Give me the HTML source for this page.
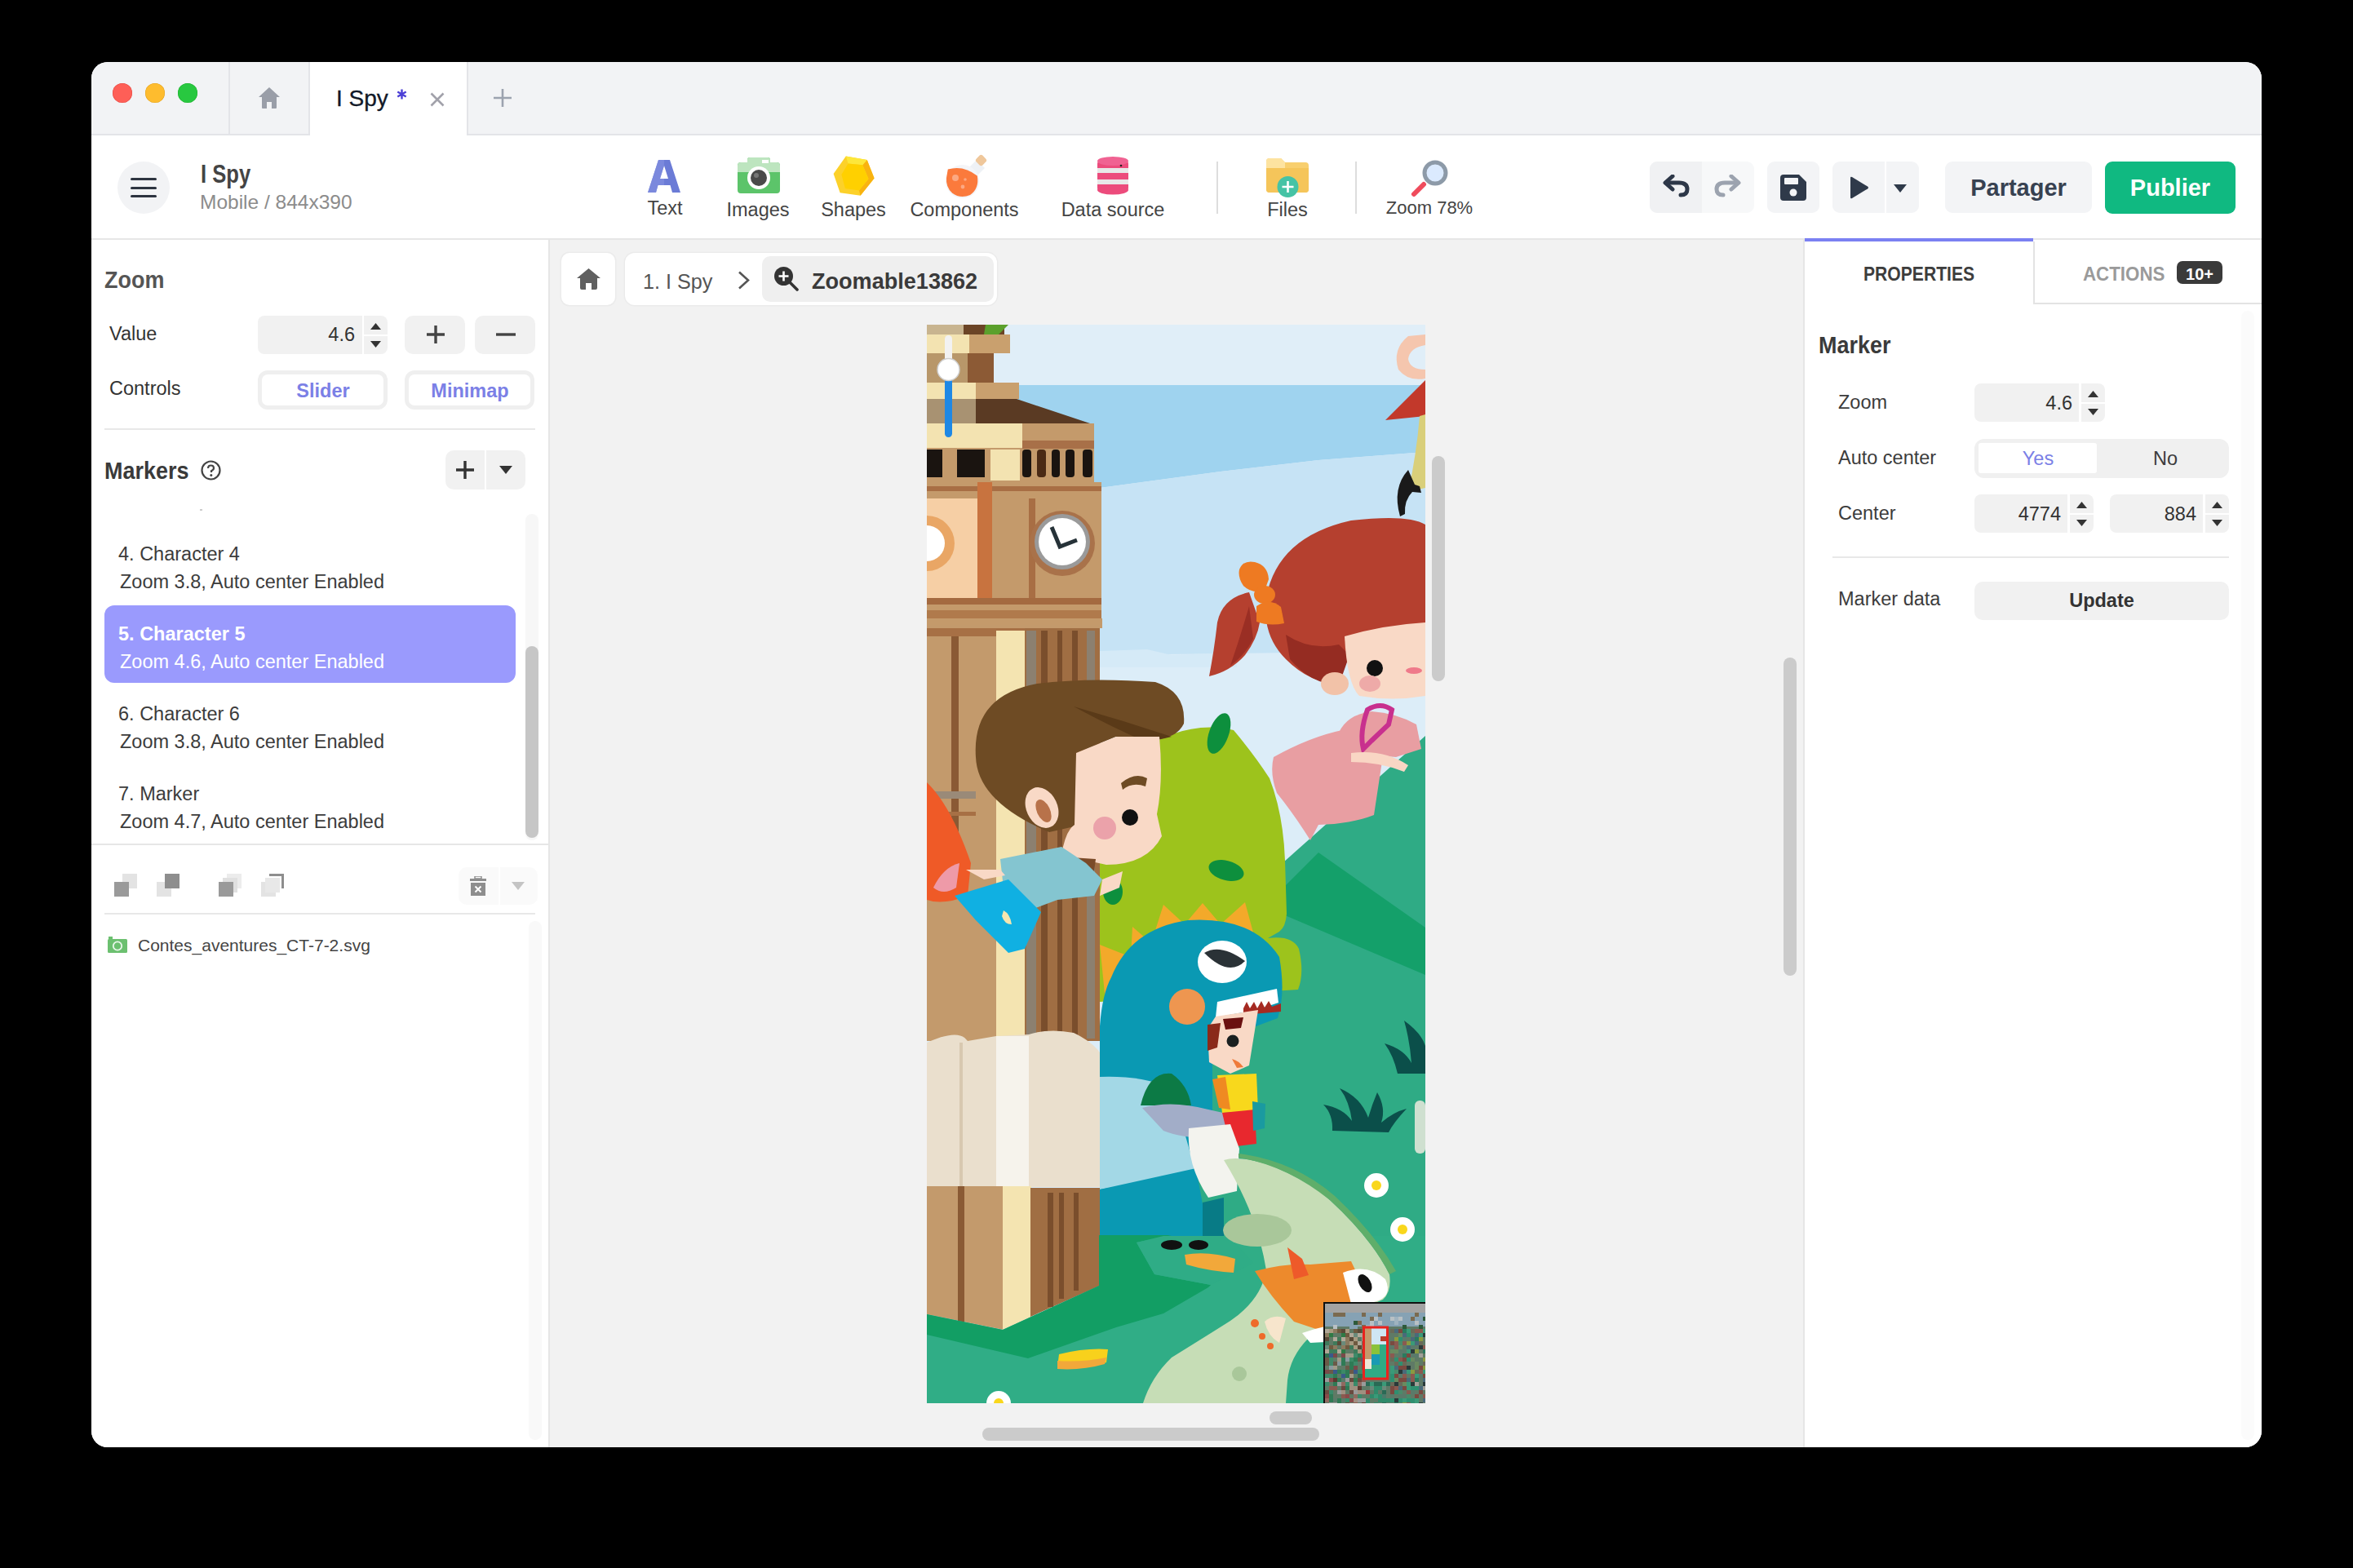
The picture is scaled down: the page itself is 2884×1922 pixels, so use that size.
<!DOCTYPE html><html><head><meta charset="utf-8"><style>
html,body{margin:0;padding:0;width:2884px;height:1922px;overflow:hidden;background:#000;}
body{font-family:"Liberation Sans", sans-serif;}
#win{position:absolute;left:112px;top:76px;width:2660px;height:1698px;border-radius:20px;overflow:hidden;background:#fff;}
#pg{position:absolute;left:-112px;top:-76px;width:2884px;height:1922px;}
.t{position:absolute;white-space:nowrap;}
.r{position:absolute;display:block;}
</style></head><body><div id="win"><div id="pg">
<div class="r" style="left:112px;top:76px;width:2660px;height:90px;background:#f2f3f5;"></div>
<div class="r" style="left:112px;top:164px;width:2660px;height:2px;background:#e3e4e8;"></div>
<div class="r" style="left:138px;top:102px;width:24px;height:24px;border-radius:50%;background:#fe5f57;box-shadow:inset 0 0 0 0.5px #e14640"></div>
<div class="r" style="left:178px;top:102px;width:24px;height:24px;border-radius:50%;background:#febc2e;box-shadow:inset 0 0 0 0.5px #dfa123"></div>
<div class="r" style="left:218px;top:102px;width:24px;height:24px;border-radius:50%;background:#28c840;box-shadow:inset 0 0 0 0.5px #1dad2b"></div>
<div class="r" style="left:280px;top:76px;width:2px;height:90px;background:#e3e4e8;"></div>
<div class="r" style="left:378px;top:76px;width:2px;height:90px;background:#e3e4e8;"></div>
<svg class="r" style="left:317px;top:107px;" width="26" height="26" viewBox="0 0 26 26"><path d="M13 0 L26 12 L22 12 L22 25 Q22 26 21 26 L16 26 L16 18 L10 18 L10 26 L5 26 Q4 26 4 25 L4 12 L0 12 Z" fill="#9a9ea8"/></svg>
<div class="r" style="left:380px;top:76px;width:192px;height:90px;background:#ffffff;"></div>
<div class="r" style="left:572px;top:76px;width:2px;height:90px;background:#e3e4e8;"></div>
<div class="t" style="left:412px;top:107.2px;font-size:28px;line-height:28px;color:#111827;font-weight:400;-webkit-text-stroke:0.3px #111827">I Spy</div>
<svg class="r" style="left:486px;top:109px;" width="13" height="13" viewBox="0 0 13 13"><path d="M6.5 0.5 V12.5 M1.3 3.5 L11.7 9.5 M11.7 3.5 L1.3 9.5" stroke="#4b3fd6" stroke-width="2.4"/></svg>
<svg class="r" style="left:527px;top:113px;" width="18" height="18" viewBox="0 0 18 18"><path d="M1.5 1.5 L16.5 16.5 M16.5 1.5 L1.5 16.5" stroke="#a1a1aa" stroke-width="2.6" stroke-linecap="butt"/></svg>
<svg class="r" style="left:604px;top:108px;" width="24" height="24" viewBox="0 0 24 24"><path d="M12 1 V23 M1 12 H23" stroke="#9ca3af" stroke-width="2.6"/></svg>
<div class="r" style="left:112px;top:166px;width:2660px;height:126px;background:#ffffff;"></div>
<div class="r" style="left:112px;top:292px;width:2660px;height:2px;background:#e6e6e6;"></div>
<div class="r" style="left:144px;top:198px;width:64px;height:64px;border-radius:50%;background:#f2f3f5"></div>
<div class="r" style="left:160px;top:218px;width:32px;height:3px;border-radius:2px;background:#2d3440"></div>
<div class="r" style="left:160px;top:228.5px;width:32px;height:3px;border-radius:2px;background:#2d3440"></div>
<div class="r" style="left:160px;top:239px;width:32px;height:3px;border-radius:2px;background:#2d3440"></div>
<div class="t" style="left:246px;top:196.8px;font-size:32px;line-height:32px;color:#444;font-weight:700;transform:scaleX(0.8);transform-origin:0 0;">I Spy</div>
<div class="t" style="left:245px;top:236.2px;font-size:24.5px;line-height:24.5px;color:#8c8c8c;font-weight:400;">Mobile / 844x390</div>
<svg class="r" style="left:794px;top:196px;" width="40" height="40" viewBox="0 0 40 40"><path fill-rule="evenodd" d="M13 0 H27 L40 40 H30 L27.5 31 H12.5 L10 40 H0 Z M15 23 H25 L20 7 Z" fill="#6b7bd6"/><path d="M13 0 H20 V7 L15 23 H20 V31 H12.5 L10 40 H0 Z" fill="#8190e0" opacity="0.7"/></svg>
<div class="t" style="left:755.0px;width:120px;text-align:center;top:244.0px;font-size:23.5px;line-height:23.5px;color:#444;font-weight:400;">Text</div>
<svg class="r" style="left:904px;top:193px;" width="52" height="44" viewBox="0 0 52 44">
<path d="M12 3 Q12 0 15 0 H37 Q40 0 40 3 V6 H48 Q52 6 52 10 V40 Q52 44 48 44 H4 Q0 44 0 40 V10 Q0 6 4 6 H12 Z" fill="#5cc46a"/>
<path d="M12 3 Q12 0 15 0 H37 Q40 0 40 3 V6 H48 Q52 6 52 10 V18 H0 V10 Q0 6 4 6 H12 Z" fill="#bde5bf"/>
<rect x="30" y="3" width="8" height="4" fill="#fff"/>
<circle cx="26" cy="25" r="14" fill="#fff"/><circle cx="26" cy="25" r="10" fill="#4a4a4a"/><circle cx="23" cy="22" r="3" fill="#777"/></svg>
<div class="t" style="left:859.0px;width:140px;text-align:center;top:246.0px;font-size:23.5px;line-height:23.5px;color:#444;font-weight:400;">Images</div>
<svg class="r" style="left:1020px;top:191px;" width="54" height="51" viewBox="0 0 54 51">
<path d="M16.8 0.6 L42.7 5 L51.6 27.4 L34.6 48.8 L9.6 45.3 L1.6 22 Z" fill="#fcd12a"/>
<path d="M42.7 5 L51.6 27.4 L34.6 48.8 L32.9 42.6 L44.5 28.3 L37.3 11.3 Z" fill="#f9b310"/>
<path d="M16.8 0.6 L42.7 5 L37.3 11.3 L19.5 9.5 Z" fill="#fde73a"/>
<path d="M19.5 9.5 L37.3 11.3 L44.5 28.3 L32.9 42.6 L15.9 40 L11.4 23 Z" fill="#ffd000"/></svg>
<div class="t" style="left:976.0px;width:140px;text-align:center;top:246.0px;font-size:23.5px;line-height:23.5px;color:#444;font-weight:400;">Shapes</div>
<svg class="r" style="left:1157px;top:188px;" width="56" height="56" viewBox="0 0 56 56">
<path d="M26 22 L40 8 L50 18 L36 32 Z" fill="#eef1f5"/>
<rect x="40" y="3" width="11" height="11" rx="3" transform="rotate(45 45.5 8.5)" fill="#efc79b"/>
<circle cx="22.6" cy="34.4" r="20.5" fill="#f4f5f8"/>
<path d="M4.8 19.5 Q24 14 40.8 27.5 Q43.5 43 32 51 Q20 56 10 48.5 Q2 41 3 30 Z" fill="#fb7a3c"/>
<circle cx="14" cy="30" r="4" fill="#fca882"/><circle cx="26" cy="32" r="1.8" fill="#fca882"/><circle cx="23" cy="41" r="2.4" fill="#fca882"/></svg>
<div class="t" style="left:1092.0px;width:180px;text-align:center;top:246.0px;font-size:23.5px;line-height:23.5px;color:#444;font-weight:400;">Components</div>
<svg class="r" style="left:1345px;top:192px;" width="38" height="47" viewBox="0 0 38 47">
<rect x="0" y="5" width="38" height="37" rx="4" fill="#ec4b7c"/>
<ellipse cx="19" cy="5.5" rx="19" ry="5.5" fill="#f06292"/>
<rect x="0" y="14" width="38" height="6" fill="#e8e8e8"/>
<rect x="0" y="28" width="38" height="6" fill="#e8e8e8"/>
<ellipse cx="19" cy="41" rx="19" ry="5.5" fill="#ec4b7c"/>
<circle cx="29" cy="11" r="1.3" fill="#222"/></svg>
<div class="t" style="left:1284.0px;width:160px;text-align:center;top:246.0px;font-size:23.5px;line-height:23.5px;color:#444;font-weight:400;">Data source</div>
<div class="r" style="left:1491px;top:198px;width:2px;height:64px;background:#dddddd;"></div>
<svg class="r" style="left:1552px;top:194px;" width="54" height="48" viewBox="0 0 54 48">
<path d="M0 4 Q0 0 4 0 H18 L23 5 H48 Q52 5 52 9 V38 Q52 42 48 42 H4 Q0 42 0 38 Z" fill="#f8cf6e"/>
<path d="M0 12 H52 V38 Q52 42 48 42 H4 Q0 42 0 38 Z" fill="#f5c55a"/>
<path d="M0 4 Q0 0 4 0 H18 L23 5 V12 H0 Z" fill="#fde3a0"/>
<circle cx="26.5" cy="35" r="13" fill="#46c3a5"/>
<path d="M26.5 28 V42 M19.5 35 H33.5" stroke="#fff" stroke-width="2.6"/></svg>
<div class="t" style="left:1528.0px;width:100px;text-align:center;top:246.0px;font-size:23.5px;line-height:23.5px;color:#444;font-weight:400;">Files</div>
<div class="r" style="left:1661px;top:198px;width:2px;height:64px;background:#dddddd;"></div>
<svg class="r" style="left:1729px;top:196px;" width="46" height="46" viewBox="0 0 46 46">
<line x1="4" y1="42" x2="16" y2="30" stroke="#ef4b5c" stroke-width="6" stroke-linecap="round"/>
<circle cx="30" cy="16" r="13" fill="#dbeafe" stroke="#8d9aa8" stroke-width="5"/></svg>
<div class="t" style="left:1682.0px;width:140px;text-align:center;top:243.8px;font-size:22px;line-height:22px;color:#444;font-weight:400;">Zoom 78%</div>
<div class="r" style="left:2022px;top:198px;width:128px;height:63px;border-radius:9px;background:#f7f8f9"></div>
<div class="r" style="left:2022px;top:198px;width:64px;height:63px;border-radius:9px 0 0 9px;background:#f0f1f3"></div>
<svg class="r" style="left:2038px;top:214px;" width="34" height="28" viewBox="0 0 34 28"><path d="M12 2 L3 10 L12 18" fill="none" stroke="#2d3748" stroke-width="5" stroke-linecap="round" stroke-linejoin="round"/><path d="M4 10 H20 Q30 10 30 18 Q30 25 22 25" fill="none" stroke="#2d3748" stroke-width="5" stroke-linecap="round"/></svg>
<svg class="r" style="left:2100px;top:214px;" width="34" height="28" viewBox="0 0 34 28"><g transform="translate(34,0) scale(-1,1)"><path d="M12 2 L3 10 L12 18" fill="none" stroke="#9ca3af" stroke-width="5" stroke-linecap="round" stroke-linejoin="round"/><path d="M4 10 H20 Q30 10 30 18 Q30 25 22 25" fill="none" stroke="#9ca3af" stroke-width="5" stroke-linecap="round"/></g></svg>
<div class="r" style="left:2166px;top:198px;width:64px;height:63px;border-radius:9px;background:#f3f4f6"></div>
<svg class="r" style="left:2182px;top:214px;" width="32" height="32" viewBox="0 0 32 32"><path d="M0 4 Q0 0 4 0 H23 L32 9 V28 Q32 32 28 32 H4 Q0 32 0 28 Z" fill="#2f3a4a"/><rect x="5" y="4" width="17" height="8" rx="1" fill="#f3f4f6"/><circle cx="16" cy="22" r="4.5" fill="#f3f4f6"/></svg>
<div class="r" style="left:2246px;top:198px;width:106px;height:63px;border-radius:9px;background:#f3f4f6"></div>
<div class="r" style="left:2310px;top:198px;width:2px;height:63px;background:#ffffff;"></div>
<svg class="r" style="left:2266px;top:216px;" width="25" height="28" viewBox="0 0 25 28"><path d="M2 2 Q2 0 4 1 L23 12.5 Q25 14 23 15.5 L4 27 Q2 28 2 26 Z" fill="#2f3a4a"/></svg>
<svg class="r" style="left:2321px;top:226px;" width="16" height="10" viewBox="0 0 16 10"><path d="M0 0 H16 L8 10 Z" fill="#2f3a4a"/></svg>
<div class="r" style="left:2384px;top:198px;width:180px;height:63px;border-radius:9px;background:#f3f4f6"></div>
<div class="t" style="left:2384.0px;width:180px;text-align:center;top:215.8px;font-size:29px;line-height:29px;color:#374151;font-weight:700;">Partager</div>
<div class="r" style="left:2580px;top:198px;width:160px;height:64px;border-radius:9px;background:#10b981"></div>
<div class="t" style="left:2580.0px;width:160px;text-align:center;top:215.8px;font-size:29px;line-height:29px;color:#ffffff;font-weight:700;">Publier</div>
<div class="r" style="left:112px;top:294px;width:560px;height:1480px;background:#ffffff;"></div>
<div class="r" style="left:672px;top:294px;width:2px;height:1480px;background:#e6e6e6;"></div>
<div class="t" style="left:128px;top:329.4px;font-size:29px;line-height:29px;color:#555;font-weight:700;transform:scaleX(0.93);transform-origin:0 0;">Zoom</div>
<div class="t" style="left:134px;top:397.5px;font-size:23.5px;line-height:23.5px;color:#333;font-weight:400;">Value</div>
<div class="r" style="left:316px;top:387px;width:128px;height:47px;border-radius:8px 0 0 8px;background:#f1f1f1"></div>
<div class="r" style="left:446px;top:387px;width:29px;height:22.5px;border-radius:0 8px 0 0;background:#f1f1f1"></div>
<div class="r" style="left:446px;top:411.5px;width:29px;height:22.5px;border-radius:0 0 8px 0;background:#f1f1f1"></div>
<div class="t" style="left:355px;width:80px;text-align:right;top:399.0px;font-size:23.5px;line-height:23.5px;color:#333;font-weight:400;">4.6</div>
<svg class="r" style="left:454px;top:396px;" width="13" height="8" viewBox="0 0 13 8"><path d="M0 8 L6.5 0 L13 8 Z" fill="#333"/></svg>
<svg class="r" style="left:454px;top:418px;" width="13" height="8" viewBox="0 0 13 8"><path d="M0 0 L6.5 8 L13 0 Z" fill="#333"/></svg>
<div class="r" style="left:496px;top:387px;width:74px;height:47px;border-radius:10px;background:#f1f1f1"></div>
<div class="r" style="left:582px;top:387px;width:74px;height:47px;border-radius:10px;background:#f1f1f1"></div>
<svg class="r" style="left:522px;top:398px;" width="24" height="24" viewBox="0 0 24 24"><path d="M12 1 V23 M1 12 H23" stroke="#444" stroke-width="3.4"/></svg>
<svg class="r" style="left:608px;top:408px;" width="24" height="4" viewBox="0 0 24 4"><path d="M0 2 H24" stroke="#444" stroke-width="3.4"/></svg>
<div class="t" style="left:134px;top:465.3px;font-size:23.5px;line-height:23.5px;color:#333;font-weight:400;">Controls</div>
<div class="r" style="left:316px;top:454px;width:159px;height:48px;border-radius:12px;background:#ffffff;box-shadow:inset 0 0 0 5px #efefef"></div>
<div class="r" style="left:496px;top:454px;width:159px;height:48px;border-radius:12px;background:#ffffff;box-shadow:inset 0 0 0 5px #efefef"></div>
<div class="t" style="left:321.0px;width:150px;text-align:center;top:468.0px;font-size:23.5px;line-height:23.5px;color:#7b80e6;font-weight:700;">Slider</div>
<div class="t" style="left:501.0px;width:150px;text-align:center;top:468.0px;font-size:23.5px;line-height:23.5px;color:#7b80e6;font-weight:700;">Minimap</div>
<div class="r" style="left:128px;top:525px;width:528px;height:2px;background:#e8e8e8;"></div>
<div class="t" style="left:128px;top:563.4px;font-size:29px;line-height:29px;color:#3a3a3a;font-weight:700;transform:scaleX(0.93);transform-origin:0 0;">Markers</div>
<svg class="r" style="left:246px;top:564px;" width="25" height="25" viewBox="0 0 25 25"><circle cx="12.5" cy="12.5" r="11" fill="none" stroke="#444" stroke-width="2.2"/><path d="M9 10 Q9 6.5 12.5 6.5 Q16 6.5 16 9.8 Q16 12 13 13.2 V15" fill="none" stroke="#444" stroke-width="2.2"/><circle cx="12.8" cy="18.5" r="1.5" fill="#444"/></svg>
<div class="r" style="left:546px;top:552px;width:98px;height:48px;border-radius:10px;background:#f1f1f1"></div>
<div class="r" style="left:594px;top:552px;width:2px;height:48px;background:#ffffff;"></div>
<svg class="r" style="left:558px;top:564px;" width="24" height="24" viewBox="0 0 24 24"><path d="M12 1 V23 M1 12 H23" stroke="#333" stroke-width="3.4"/></svg>
<svg class="r" style="left:612px;top:571px;" width="16" height="10" viewBox="0 0 16 10"><path d="M0 0 H16 L8 10 Z" fill="#333"/></svg>
<div class="r" style="left:644px;top:630px;width:16px;height:400px;border-radius:8px;background:#f7f7f7"></div>
<div class="r" style="left:644px;top:792px;width:16px;height:235px;border-radius:8px;background:#c6c6c6"></div>
<div class="r" style="left:245px;top:624px;width:3px;height:2px;background:#cccccc;"></div>
<div class="t" style="left:145px;top:668.0px;font-size:23.5px;line-height:23.5px;color:#3c3c3c;font-weight:400;">4. Character 4</div>
<div class="t" style="left:147px;top:701.7px;font-size:23.5px;line-height:23.5px;color:#3c3c3c;font-weight:400;">Zoom 3.8, Auto center Enabled</div>
<div class="r" style="left:128px;top:742px;width:504px;height:95px;border-radius:12px;background:#9a9afd"></div>
<div class="t" style="left:145px;top:766.0px;font-size:23.5px;line-height:23.5px;color:#ffffff;font-weight:700;">5. Character 5</div>
<div class="t" style="left:147px;top:799.5px;font-size:23.5px;line-height:23.5px;color:#ffffff;font-weight:400;">Zoom 4.6, Auto center Enabled</div>
<div class="t" style="left:145px;top:864.0px;font-size:23.5px;line-height:23.5px;color:#3c3c3c;font-weight:400;">6. Character 6</div>
<div class="t" style="left:147px;top:898.0px;font-size:23.5px;line-height:23.5px;color:#3c3c3c;font-weight:400;">Zoom 3.8, Auto center Enabled</div>
<div class="t" style="left:145px;top:962.0px;font-size:23.5px;line-height:23.5px;color:#3c3c3c;font-weight:400;">7. Marker</div>
<div class="t" style="left:147px;top:995.7px;font-size:23.5px;line-height:23.5px;color:#3c3c3c;font-weight:400;">Zoom 4.7, Auto center Enabled</div>
<div class="r" style="left:112px;top:1034px;width:560px;height:2px;background:#e6e6e6;"></div>
<svg class="r" style="left:140px;top:1071px;" width="28" height="28" viewBox="0 0 28 28"><rect x="10" y="0" width="18" height="18" fill="#e3e3e3"/><rect x="0" y="10" width="18" height="18" fill="#9a9a9a"/></svg>
<svg class="r" style="left:192px;top:1071px;" width="28" height="28" viewBox="0 0 28 28"><rect x="0" y="10" width="18" height="18" fill="#e3e3e3"/><rect x="10" y="0" width="18" height="18" fill="#8e8e8e"/></svg>
<svg class="r" style="left:268px;top:1071px;" width="28" height="28" viewBox="0 0 28 28"><rect x="10" y="0" width="18" height="18" fill="#ececec"/><rect x="5" y="5" width="18" height="18" fill="#e0e0e0"/><rect x="0" y="10" width="18" height="18" fill="#9a9a9a"/></svg>
<svg class="r" style="left:320px;top:1071px;" width="28" height="28" viewBox="0 0 28 28"><rect x="0" y="10" width="18" height="18" fill="#e3e3e3"/><rect x="5" y="5" width="18" height="18" fill="#e8e8e8"/><path d="M10 1.5 H26.5 V18" fill="none" stroke="#8e8e8e" stroke-width="3"/></svg>
<div class="r" style="left:562px;top:1063px;width:97px;height:46px;border-radius:10px;background:#fafafa"></div>
<div class="r" style="left:611px;top:1063px;width:2px;height:46px;background:#ffffff;"></div>
<svg class="r" style="left:576px;top:1074px;" width="20" height="25" viewBox="0 0 20 25"><rect x="0" y="3" width="20" height="3" fill="#8e8e8e"/><rect x="6" y="0" width="8" height="3" fill="none" stroke="#8e8e8e" stroke-width="1.5"/><path d="M1 8 H19 V24 H1 Z" fill="#8e8e8e"/><path d="M6.5 12.5 L13.5 19.5 M13.5 12.5 L6.5 19.5" stroke="#fff" stroke-width="2"/></svg>
<svg class="r" style="left:627px;top:1081px;" width="16" height="10" viewBox="0 0 16 10"><path d="M0 0 H16 L8 10 Z" fill="#c4c4c4"/></svg>
<div class="r" style="left:128px;top:1119px;width:528px;height:2px;background:#e8e8e8;"></div>
<div class="r" style="left:648px;top:1129px;width:16px;height:636px;border-radius:8px;background:#f9f9f9"></div>
<svg class="r" style="left:132px;top:1148px;" width="24" height="20" viewBox="0 0 24 20"><rect x="0" y="3" width="24" height="17" rx="1.5" fill="#6cc070"/><rect x="1" y="0" width="5" height="3" fill="#6cc070"/><circle cx="12" cy="11.5" r="5.2" fill="none" stroke="#e9f6ea" stroke-width="1.8"/></svg>
<div class="t" style="left:169px;top:1147.5px;font-size:21px;line-height:21px;color:#444;font-weight:400;">Contes_aventures_CT-7-2.svg</div>
<div class="r" style="left:674px;top:294px;width:1537px;height:1480px;background:#f2f2f2;"></div>
<div class="r" style="left:688px;top:310px;width:66px;height:64px;border-radius:10px;background:#fff;box-shadow:0 0 0 1.5px #ebebeb"></div>
<svg class="r" style="left:707px;top:329px;" width="29" height="26" viewBox="0 0 29 26"><path d="M14.5 0 L29 12 L25 12 L25 24 Q25 26 23 26 L18 26 L18 18 L11 18 L11 26 L6 26 Q4 26 4 24 L4 12 L0 12 Z" fill="#606060"/></svg>
<div class="r" style="left:766px;top:310px;width:456px;height:64px;border-radius:12px;background:#fff;box-shadow:0 0 0 1.5px #ebebeb"></div>
<div class="t" style="left:788px;top:331.5px;font-size:26.5px;line-height:26.5px;color:#555;font-weight:400;transform:scaleX(0.95);transform-origin:0 0;">1. I Spy</div>
<svg class="r" style="left:904px;top:332px;" width="16" height="23" viewBox="0 0 16 23"><path d="M2 1.5 L13 11.5 L2 21.5" fill="none" stroke="#555" stroke-width="2.6"/></svg>
<div class="r" style="left:934px;top:314px;width:284px;height:56px;border-radius:10px;background:#efefef"></div>
<svg class="r" style="left:949px;top:327px;" width="30" height="30" viewBox="0 0 30 30"><circle cx="11.5" cy="11.5" r="11.5" fill="#333"/><path d="M11.5 5.5 V17.5 M5.5 11.5 H17.5" stroke="#fff" stroke-width="2.6"/><path d="M19 19 L28 28" stroke="#333" stroke-width="3.6" stroke-linecap="round"/></svg>
<div class="t" style="left:995px;top:329.8px;font-size:28.5px;line-height:28.5px;color:#3a3a3a;font-weight:700;transform:scaleX(0.95);transform-origin:0 0;">Zoomable13862</div>
<div class="r" style="left:2186px;top:806px;width:16px;height:390px;border-radius:8px;background:#cbcbcb"></div>
<div class="r" style="left:1204px;top:1750px;width:413px;height:16px;border-radius:8px;background:#cbcbcb"></div>
<div class="r" style="left:1755px;top:559px;width:16px;height:276px;border-radius:8px;background:#cbcbcb"></div>
<div class="r" style="left:1556px;top:1730px;width:52px;height:16px;border-radius:8px;background:#cbcbcb"></div>
<svg class="r" style="left:1136px;top:398px;overflow:hidden" width="611" height="1322" viewBox="0 0 611 1322">
<rect x="0" y="0" width="611" height="1322" fill="#dcedf8"/>
<!-- sky bands -->
<rect x="0" y="0" width="611" height="75" fill="#e0eef8"/>
<path d="M0 74 H611 V156 L480 166 L360 180 L212 200 L0 205 Z" fill="#9fd3ef"/>
<path d="M212 200 L360 180 L480 166 L611 156 V400 L212 405 Z" fill="#c6e3f5"/>
<path d="M212 400 L270 398 L300 405 L380 402 L380 420 L212 420 Z" fill="#d5eaf7"/>
<!-- top right bits -->
<path d="M590 14 Q570 30 578 55 Q590 70 611 66 L611 55 Q592 55 590 42 Q592 28 611 25 L611 12 Z" fill="#f5c6ae"/>
<path d="M562 117 L611 68 L611 112 Z" fill="#c2392b"/>
<path d="M604 112 L611 110 L611 200 L590 205 Q600 160 604 112 Z" fill="#d9cf7a"/>
<path d="M590 178 Q570 200 580 235 L586 232 Q585 215 595 205 L606 206 L604 198 L598 196 Z" fill="#1a1a1a"/>
<!-- tower top -->
<rect x="0" y="0" width="45" height="12" fill="#c8b48f"/>
<rect x="45" y="0" width="50" height="12" fill="#6b4426"/>
<path d="M72 0 L100 0 L88 12 L70 12 Z" fill="#5ba02c"/>
<rect x="0" y="12" width="102" height="23" fill="#c9a06e"/>
<rect x="0" y="12" width="52" height="23" fill="#f3e3b1"/>
<rect x="0" y="35" width="82" height="36" fill="#8c5a35"/>
<rect x="0" y="35" width="50" height="36" fill="#b8976a"/>
<rect x="0" y="71" width="113" height="20" fill="#c9a06e"/>
<rect x="0" y="71" width="60" height="20" fill="#f3e3b1"/>
<rect x="0" y="91" width="62" height="30" fill="#a89272"/>
<path d="M60 91 L110 91 L200 121 L60 121 Z" fill="#5a3a23"/>
<rect x="0" y="121" width="205" height="72" fill="#c49a6b"/>
<rect x="0" y="121" width="117" height="30" fill="#f3e3b1"/>
<rect x="117" y="142" width="88" height="10" fill="#a87048"/>
<rect x="0" y="153" width="19" height="34" fill="#1a1410"/>
<rect x="37" y="153" width="34" height="34" fill="#1a1410"/>
<rect x="78" y="153" width="36" height="38" fill="#f3e3b1"/>
<rect x="117" y="153" width="11" height="34" rx="4" fill="#1a1410"/>
<rect x="135" y="153" width="11" height="34" rx="4" fill="#4a2a15"/>
<rect x="153" y="153" width="10" height="34" rx="4" fill="#1a1410"/>
<rect x="170" y="153" width="11" height="34" rx="4" fill="#1a1410"/>
<rect x="191" y="153" width="12" height="34" rx="4" fill="#1a1410"/>
<!-- clock section -->
<rect x="0" y="193" width="214" height="176" fill="#c49a6b"/>
<rect x="0" y="198" width="214" height="6" fill="#a86e44"/>
<rect x="0" y="213" width="64" height="127" fill="#f6cfa5"/>
<rect x="62" y="193" width="18" height="150" fill="#c8733f"/>
<rect x="80" y="213" width="45" height="125" fill="#c49a6b"/>
<rect x="125" y="213" width="8" height="125" fill="#a86e44"/>
<circle cx="0" cy="268" r="34" fill="#e9a665"/>
<circle cx="0" cy="268" r="22" fill="#fff"/>
<circle cx="166" cy="268" r="40" fill="#a9724a"/>
<circle cx="166" cy="266" r="34" fill="#9a9a9a"/>
<circle cx="166" cy="266" r="29" fill="#ffffff"/>
<path d="M153 248 L163 272 L184 264" fill="none" stroke="#263238" stroke-width="5"/>
<rect x="0" y="335" width="214" height="8" fill="#a46a40"/>
<rect x="0" y="350" width="214" height="10" fill="#b07a4c"/>
<rect x="65" y="360" width="150" height="12" fill="#c49a6b"/>
<!-- lower tower -->
<rect x="0" y="368" width="212" height="510" fill="#c39a6c"/>
<rect x="0" y="372" width="120" height="10" fill="#a77045"/>
<rect x="30" y="382" width="9" height="320" fill="#8a5a34"/>
<rect x="0" y="572" width="60" height="9" fill="#9a8a78"/>
<rect x="0" y="597" width="60" height="5" fill="#a77045"/>
<rect x="85" y="375" width="35" height="500" fill="#f4e4b1"/>
<rect x="120" y="372" width="92" height="506" fill="#a06e43"/>
<rect x="122" y="375" width="12" height="500" fill="#8c8070"/>
<rect x="140" y="375" width="8" height="500" fill="#7a4e2c"/>
<rect x="160" y="375" width="6" height="500" fill="#7a4e2c"/>
<rect x="178" y="375" width="7" height="500" fill="#7a4e2c"/>
<rect x="196" y="375" width="10" height="500" fill="#8c8070"/>
<path d="M0 880 Q40 862 50 878 L85 872 L125 870 Q150 862 180 868 Q205 880 214 895 V1057 H0 Z" fill="#eadfcd"/>
<rect x="85" y="872" width="40" height="185" fill="#f6f3ec"/>
<rect x="40" y="880" width="4" height="177" fill="#d8c8b0"/>
<path d="M0 1056 H94 V1232 L0 1213 Z" fill="#c39a6c"/>
<rect x="38" y="1056" width="8" height="170" fill="#8a5a34"/>
<path d="M93 1056 H128 V1216 L93 1232 Z" fill="#f4e4b1"/>
<path d="M127 1058 H212 V1178 L127 1216 Z" fill="#a06e43"/>
<rect x="148" y="1064" width="7" height="140" fill="#7a4e2c"/>
<rect x="162" y="1064" width="6" height="130" fill="#7a4e2c"/>
<rect x="180" y="1064" width="6" height="120" fill="#7a4e2c"/>

<!-- right green hill -->
<path d="M437 659 L611 504 V1322 H330 V760 Z" fill="#2fab85"/>
<path d="M480 647 L611 739 V797 L439 724 L437 690 Z" fill="#14a06a"/>
<!-- girl dress -->
<path d="M425 530 Q470 505 509 497 L558 535 L548 601 Q520 612 480 613 L470 632 Q450 600 429 574 Q420 550 425 530 Z" fill="#e89ea2"/>
<path d="M505 500 Q515 478 545 474 Q575 476 600 490 L606 520 L575 530 L520 525 Z" fill="#e89ea2"/>
<path d="M540 472 Q556 462 570 472 L566 490 L545 510 L535 520 Q530 500 540 472 Z" fill="none" stroke="#c8308e" stroke-width="6"/>
<path d="M520 525 Q560 520 590 540 L585 548 Q555 536 520 536 Z" fill="#f9d6c4"/>
<!-- girl hair -->
<path d="M416 334 Q430 260 520 240 Q590 232 611 245 V372 Q560 372 520 388 L505 440 Q470 440 440 410 Q410 380 416 334 Z" fill="#b5402f"/>
<path d="M395 328 Q362 335 356 365 Q352 400 346 431 Q372 425 390 405 Q405 385 408 365 Z" fill="#b5402f"/>
<path d="M395 345 Q385 380 372 418 Q390 405 400 385 Z" fill="#9a2e24"/>
<path d="M440 380 Q470 400 505 392 L518 405 L505 442 Q470 440 445 410 Z" fill="#952c22"/>
<path d="M383 300 Q388 288 402 291 Q418 295 419 312 L414 326 Q398 330 388 320 Q381 310 383 300 Z" fill="#ee7a22"/>
<ellipse cx="414" cy="331" rx="13" ry="11" fill="#ee7a22"/>
<path d="M404 345 Q420 334 434 346 L438 366 Q420 370 404 364 Z" fill="#ee7a22"/>
<!-- girl face -->
<path d="M512 382 Q560 368 611 365 V455 Q570 462 530 455 Q515 440 512 382 Z" fill="#f9d9c6"/>
<ellipse cx="500" cy="440" rx="17" ry="14" fill="#f2c2a8"/>
<circle cx="549" cy="421" r="10" fill="#111"/>
<ellipse cx="543" cy="440" rx="13" ry="10" fill="#eeaaa8"/>
<ellipse cx="597" cy="424" rx="10" ry="4" fill="#ef7a8a"/>
<!-- green dino -->
<path d="M212 560 Q250 522 300 502 Q340 488 376 497 Q402 528 420 556 Q437 600 439 657 L441 722 Q440 738 432 744 L418 752 Q448 748 456 765 Q463 795 455 815 L212 830 Z" fill="#9dc31c"/>
<ellipse cx="358" cy="501" rx="12" ry="26" transform="rotate(20 358 501)" fill="#0d8f3d"/>
<ellipse cx="367" cy="669" rx="22" ry="12" transform="rotate(15 367 669)" fill="#0d8f3d"/>
<ellipse cx="228" cy="695" rx="12" ry="16" fill="#0d8f3d"/>
<!-- boy hair/face -->
<path d="M60 530 Q55 455 135 440 Q200 432 280 438 Q318 450 315 489 Q305 510 270 508 L232 505 L183 525 L181 615 L150 622 Q62 585 60 530 Z" fill="#6e4b24"/>
<path d="M180 468 Q240 485 300 505 L270 512 Q230 495 180 468 Z" fill="#5a3a18"/>
<path d="M232 505 L285 505 Q290 560 282 600 L288 627 Q270 662 220 662 L165 650 Q170 620 181 613 L183 525 Z" fill="#f9d9c6"/>
<path d="M177 653 L207 655 L205 670 L180 668 Z" fill="#7a4a28"/>
<ellipse cx="141" cy="592" rx="19" ry="26" transform="rotate(-25 141 592)" fill="#f9d9c6"/>
<ellipse cx="143" cy="596" rx="8" ry="15" transform="rotate(-25 143 596)" fill="#b8724a"/>
<circle cx="249" cy="604" r="10" fill="#111"/>
<circle cx="218" cy="617" r="14" fill="#eba2aa"/>
<path d="M238 562 Q255 548 270 556 L268 566 Q252 560 240 570 Z" fill="#6e4b24"/>
<!-- orange red thing -->
<path d="M0 561 Q30 590 54 660 L50 700 Q20 712 0 705 Z" fill="#ef5a27"/>
<path d="M8 690 Q20 665 40 660 L36 690 Q20 700 8 690 Z" fill="#ee9aa8"/>
<!-- boy shirt & blue -->
<path d="M90 655 L165 640 L195 660 L215 680 L205 700 L160 705 L120 720 L95 700 Z" fill="#84c5d0"/>
<path d="M48 668 L90 668 L96 675 L70 680 Z" fill="#f9d9c6"/>
<path d="M215 680 L240 670 L236 690 L212 700 Z" fill="#f9d9c6"/>
<path d="M34 700 L100 680 L140 720 L120 765 L100 770 L60 730 Z" fill="#10b0e2"/>
<path d="M94 718 Q102 722 104 735 Q95 735 92 725 Z" fill="#f5e6b0"/>

<!-- spikes -->
<path d="M212 760 L250 775 L252 738 L275 758 L290 711 L316 735 L338 709 L360 735 L390 708 L400 745 L220 840 Z" fill="#f3a92a"/>
<!-- teal dino -->
<path d="M226 800 Q250 740 320 730 Q400 725 432 775 Q440 820 430 850 L350 880 L350 1040 L300 1060 L212 1060 L212 860 Q215 820 226 800 Z" fill="#0a99b3"/>

<path d="M212 922 Q260 920 300 935 L330 1040 L212 1060 Z" fill="#a3d8e6"/>
<path d="M212 1060 L330 1034 L345 1117 L212 1117 Z" fill="#0a99b3"/>
<ellipse cx="362" cy="781" rx="30" ry="26" fill="#ffffff"/>
<path d="M340 770 Q360 758 390 780 Q370 800 340 770 Z" fill="#2a3236"/>
<circle cx="319" cy="836" r="22" fill="#ee9650"/>
<path d="M356 830 L429 814 L431 831 L404 840 L354 849 Z" fill="#ffffff"/>
<path d="M388 838 L392 830 L396 838 L401 830 L405 838 L410 829 L414 837 L419 829 L423 836 L434 832 L434 842 L388 846 Z" fill="#a52a22"/>
<path d="M354 848 L406 840 L395 908 L372 918 L346 904 L344 863 Z" fill="#f9d9c6"/>
<path d="M344 858 L360 856 L356 886 L344 890 Z" fill="#8a2a1a"/>
<path d="M363 851 L388 849 L385 862 L366 864 Z" fill="#6a1010"/>
<circle cx="375" cy="878" r="7.5" fill="#1a2020"/>
<path d="M374 900 Q382 902 388 910 L380 911 Z" fill="#ef7a3a"/>
<path d="M262 957 Q272 915 300 918 Q320 932 324 957 Z" fill="#0c7a45"/>
<path d="M264 960 Q300 950 345 962 L372 968 L370 996 Q320 1000 290 988 Z" fill="#a2adc8"/>
<path d="M356 920 L404 918 L406 964 L362 966 Z" fill="#f8d81c"/>
<path d="M350 925 L366 922 L372 962 L358 960 Z" fill="#ef8a22"/>
<path d="M362 966 L402 962 L404 1004 L372 1008 Z" fill="#e8282e"/>
<path d="M399 952 L415 955 L414 985 L400 988 Z" fill="#1a9aa0"/>
<path d="M321 985 L372 980 L383 1010 L380 1062 L345 1070 Q318 1030 321 985 Z" fill="#f3f3ee"/>
<path d="M338 1076 L364 1070 L364 1117 L338 1117 Z" fill="#087b86"/>
<!-- ground -->
<path d="M0 1213 L93 1232 L128 1216 L211 1178 L211 1117 L611 1117 V1322 H0 Z" fill="#30ad86"/>
<path d="M0 1213 L93 1232 L128 1216 L211 1178 L211 1116 L300 1116 L257 1125 L279 1164 L348 1177 L345 1180 L290 1212 L232 1229 L124 1267 L0 1238 Z" fill="#129e64"/>
<path d="M257 1125 L290 1117 L370 1117 L400 1150 L348 1177 L279 1164 Z" fill="#2fac86"/>
<!-- path -->
<path d="M364 1024 Q382 1018 420 1030 Q470 1050 494 1073 Q545 1120 567 1164 Q570 1185 559 1195 Q500 1220 468 1242 Q445 1265 442 1294 L440 1322 H265 Q275 1290 300 1266 Q350 1235 372 1221 Q410 1195 416 1159 Q405 1090 364 1024 Z" fill="#c6ddb6"/>
<path d="M382 1021 Q440 1030 494 1073 Q545 1120 567 1164 L575 1160 Q550 1115 500 1068 Q450 1025 382 1016 Z" fill="#5fae6a"/>
<ellipse cx="405" cy="1110" rx="42" ry="20" fill="#a9c79a"/>
<circle cx="383" cy="1286" r="9" fill="#a9c79a"/>
<!-- shoes, leaves -->
<ellipse cx="300" cy="1128" rx="13" ry="6" fill="#111"/>
<ellipse cx="333" cy="1128" rx="12" ry="6" fill="#111"/>
<path d="M316 1140 Q345 1135 378 1145 L376 1162 Q345 1160 318 1152 Z" fill="#f2a83a"/>
<path d="M162 1262 Q195 1254 222 1256 L220 1272 Q190 1280 160 1278 Z" fill="#f8d11c"/>
<path d="M160 1270 Q190 1272 220 1266 L218 1274 Q190 1282 160 1280 Z" fill="#f2a83a"/>
<!-- bird -->
<path d="M402 1160 Q440 1150 470 1152 L520 1148 L535 1180 Q520 1220 480 1232 L450 1222 Q420 1190 402 1160 Z" fill="#ed8a2c"/>
<path d="M442 1131 L460 1145 L468 1165 L450 1170 Z" fill="#ee5a2a"/>
<path d="M510 1162 Q540 1150 562 1170 Q572 1192 548 1198 L520 1200 Z" fill="#ffffff"/>
<ellipse cx="537" cy="1175" rx="7" ry="12" transform="rotate(-30 537 1175)" fill="#111"/>
<path d="M460 1236 Q490 1225 520 1225 L525 1245 L470 1248 Z" fill="#ffffff"/>
<path d="M414 1222 Q425 1212 440 1218 L432 1248 Q418 1240 414 1222 Z" fill="#f7e5cc"/>
<circle cx="402" cy="1224" r="5" fill="#ee6a2a"/><circle cx="411" cy="1240" r="4" fill="#ee6a2a"/><circle cx="421" cy="1252" r="4" fill="#ee6a2a"/>
<!-- grass tufts, flowers -->
<path d="M497 988 Q498 968 486 956 Q510 960 521 976 Q518 952 506 936 Q532 947 541 972 Q546 955 552 941 Q563 960 557 978 Q572 965 588 961 Q572 978 566 990 Z" fill="#0b4f4a"/>
<path d="M577 918 Q572 896 561 881 Q585 888 594 905 Q592 878 585 853 Q606 868 611 884 V918 Z" fill="#0b4f4a"/>
<circle cx="551" cy="1055" r="15" fill="#ffffff"/><circle cx="551" cy="1055" r="6" fill="#f9d71c"/>
<circle cx="583" cy="1109" r="15" fill="#ffffff"/><circle cx="583" cy="1109" r="6" fill="#f9d71c"/>
<circle cx="88" cy="1322" r="15" fill="#ffffff"/><circle cx="88" cy="1322" r="6" fill="#f9d71c"/>
<rect x="598" y="951" width="13" height="65" rx="6" fill="#cfe0d0"/>
<rect x="486" y="1198" width="125" height="124" fill="#111"/>
<rect x="488" y="1200" width="123" height="122" fill="#5f7a66"/>
<rect x="488" y="1200" width="123" height="11" fill="#a3a3a3"/>
<rect x="488" y="1211" width="123" height="17" fill="#86a2b4"/>
<rect x="488" y="1211" width="5" height="5" fill="#86a2b4"/>
<rect x="498" y="1211" width="5" height="5" fill="#7a6a50"/>
<rect x="503" y="1211" width="5" height="5" fill="#7a6a50"/>
<rect x="508" y="1211" width="5" height="5" fill="#7a6a50"/>
<rect x="513" y="1211" width="5" height="5" fill="#86a2b4"/>
<rect x="523" y="1211" width="5" height="5" fill="#86a2b4"/>
<rect x="533" y="1211" width="5" height="5" fill="#7a6a50"/>
<rect x="538" y="1211" width="5" height="5" fill="#86a2b4"/>
<rect x="553" y="1211" width="5" height="5" fill="#7a6a50"/>
<rect x="568" y="1211" width="5" height="5" fill="#86a2b4"/>
<rect x="573" y="1211" width="5" height="5" fill="#86a2b4"/>
<rect x="598" y="1211" width="5" height="5" fill="#7a6a50"/>
<rect x="493" y="1216" width="5" height="5" fill="#86a2b4"/>
<rect x="533" y="1216" width="5" height="5" fill="#86a2b4"/>
<rect x="543" y="1216" width="5" height="5" fill="#7a6a50"/>
<rect x="548" y="1216" width="5" height="5" fill="#b8c0c4"/>
<rect x="563" y="1216" width="5" height="5" fill="#86a2b4"/>
<rect x="568" y="1216" width="5" height="5" fill="#b8c0c4"/>
<rect x="573" y="1216" width="5" height="5" fill="#9fb3bf"/>
<rect x="578" y="1216" width="5" height="5" fill="#b8c0c4"/>
<rect x="593" y="1216" width="5" height="5" fill="#7a6a50"/>
<rect x="608" y="1216" width="3" height="5" fill="#2e5a3a"/>
<rect x="503" y="1221" width="5" height="5" fill="#86a2b4"/>
<rect x="523" y="1221" width="5" height="5" fill="#2e5a3a"/>
<rect x="528" y="1221" width="5" height="5" fill="#7a6a50"/>
<rect x="543" y="1221" width="5" height="5" fill="#b8c0c4"/>
<rect x="553" y="1221" width="5" height="5" fill="#b8c0c4"/>
<rect x="573" y="1221" width="5" height="5" fill="#9fb3bf"/>
<rect x="578" y="1221" width="5" height="5" fill="#86a2b4"/>
<rect x="598" y="1221" width="5" height="5" fill="#b8c0c4"/>
<rect x="498" y="1226" width="5" height="5" fill="#b8c0c4"/>
<rect x="518" y="1226" width="5" height="5" fill="#86a2b4"/>
<rect x="523" y="1226" width="5" height="5" fill="#86a2b4"/>
<rect x="533" y="1226" width="5" height="5" fill="#7a6a50"/>
<rect x="538" y="1226" width="5" height="5" fill="#9fb3bf"/>
<rect x="543" y="1226" width="5" height="5" fill="#b8c0c4"/>
<rect x="558" y="1226" width="5" height="5" fill="#86a2b4"/>
<rect x="583" y="1226" width="5" height="5" fill="#2e5a3a"/>
<rect x="603" y="1226" width="5" height="5" fill="#2e5a3a"/>
<rect x="488" y="1231" width="5" height="5" fill="#b0a898"/>
<rect x="493" y="1231" width="5" height="5" fill="#a89a80"/>
<rect x="498" y="1231" width="5" height="5" fill="#8b7a5e"/>
<rect x="503" y="1231" width="5" height="5" fill="#6e5a40"/>
<rect x="508" y="1231" width="5" height="5" fill="#5a4a38"/>
<rect x="513" y="1231" width="5" height="5" fill="#a89a80"/>
<rect x="523" y="1231" width="5" height="5" fill="#6e5a40"/>
<rect x="528" y="1231" width="5" height="5" fill="#5a4a38"/>
<rect x="533" y="1231" width="5" height="5" fill="#3f7a5a"/>
<rect x="568" y="1231" width="5" height="5" fill="#6a6a58"/>
<rect x="573" y="1231" width="5" height="5" fill="#4a6a7a"/>
<rect x="578" y="1231" width="5" height="5" fill="#7a4a40"/>
<rect x="583" y="1231" width="5" height="5" fill="#2a7a5e"/>
<rect x="588" y="1231" width="5" height="5" fill="#3a9a78"/>
<rect x="593" y="1231" width="5" height="5" fill="#6a6a58"/>
<rect x="598" y="1231" width="5" height="5" fill="#8a5a50"/>
<rect x="603" y="1231" width="5" height="5" fill="#8a5a50"/>
<rect x="608" y="1231" width="3" height="5" fill="#3a9a78"/>
<rect x="488" y="1236" width="5" height="5" fill="#8b7a5e"/>
<rect x="493" y="1236" width="5" height="5" fill="#2f7a45"/>
<rect x="508" y="1236" width="5" height="5" fill="#2f7a45"/>
<rect x="513" y="1236" width="5" height="5" fill="#6e5a40"/>
<rect x="518" y="1236" width="5" height="5" fill="#b0a898"/>
<rect x="523" y="1236" width="5" height="5" fill="#6a8a7a"/>
<rect x="528" y="1236" width="5" height="5" fill="#b0a898"/>
<rect x="533" y="1236" width="5" height="5" fill="#b0a898"/>
<rect x="578" y="1236" width="5" height="5" fill="#6a8a60"/>
<rect x="583" y="1236" width="5" height="5" fill="#4a6a7a"/>
<rect x="588" y="1236" width="5" height="5" fill="#2f8f70"/>
<rect x="598" y="1236" width="5" height="5" fill="#4a6a7a"/>
<rect x="603" y="1236" width="5" height="5" fill="#3a9a78"/>
<rect x="608" y="1236" width="3" height="5" fill="#2a3a3a"/>
<rect x="488" y="1241" width="5" height="5" fill="#5a4a38"/>
<rect x="498" y="1241" width="5" height="5" fill="#b0a898"/>
<rect x="503" y="1241" width="5" height="5" fill="#3f7a5a"/>
<rect x="508" y="1241" width="5" height="5" fill="#b0a898"/>
<rect x="513" y="1241" width="5" height="5" fill="#8b7a5e"/>
<rect x="518" y="1241" width="5" height="5" fill="#5a4a38"/>
<rect x="523" y="1241" width="5" height="5" fill="#a89a80"/>
<rect x="533" y="1241" width="5" height="5" fill="#9a9a90"/>
<rect x="568" y="1241" width="5" height="5" fill="#5a7a6a"/>
<rect x="573" y="1241" width="5" height="5" fill="#8a9a40"/>
<rect x="578" y="1241" width="5" height="5" fill="#2f8f70"/>
<rect x="583" y="1241" width="5" height="5" fill="#5a7a6a"/>
<rect x="593" y="1241" width="5" height="5" fill="#4a6a7a"/>
<rect x="598" y="1241" width="5" height="5" fill="#2a7a5e"/>
<rect x="603" y="1241" width="5" height="5" fill="#8a9a40"/>
<rect x="488" y="1246" width="5" height="5" fill="#3f7a5a"/>
<rect x="498" y="1246" width="5" height="5" fill="#3f7a5a"/>
<rect x="503" y="1246" width="5" height="5" fill="#5a4a38"/>
<rect x="508" y="1246" width="5" height="5" fill="#6a8a7a"/>
<rect x="513" y="1246" width="5" height="5" fill="#8b7a5e"/>
<rect x="518" y="1246" width="5" height="5" fill="#a89a80"/>
<rect x="523" y="1246" width="5" height="5" fill="#6e5a40"/>
<rect x="528" y="1246" width="5" height="5" fill="#b0a898"/>
<rect x="568" y="1246" width="5" height="5" fill="#7a4a40"/>
<rect x="573" y="1246" width="5" height="5" fill="#8a5a50"/>
<rect x="578" y="1246" width="5" height="5" fill="#4a8a6a"/>
<rect x="583" y="1246" width="5" height="5" fill="#8a5a50"/>
<rect x="588" y="1246" width="5" height="5" fill="#8a9a40"/>
<rect x="593" y="1246" width="5" height="5" fill="#3a9a78"/>
<rect x="598" y="1246" width="5" height="5" fill="#4a6a7a"/>
<rect x="603" y="1246" width="5" height="5" fill="#6a6a58"/>
<rect x="488" y="1251" width="5" height="5" fill="#6a8a7a"/>
<rect x="493" y="1251" width="5" height="5" fill="#6e5a40"/>
<rect x="498" y="1251" width="5" height="5" fill="#8b7a5e"/>
<rect x="508" y="1251" width="5" height="5" fill="#8b7a5e"/>
<rect x="513" y="1251" width="5" height="5" fill="#6e5a40"/>
<rect x="518" y="1251" width="5" height="5" fill="#3f7a5a"/>
<rect x="523" y="1251" width="5" height="5" fill="#a89a80"/>
<rect x="528" y="1251" width="5" height="5" fill="#5a4a38"/>
<rect x="533" y="1251" width="5" height="5" fill="#6a8a7a"/>
<rect x="568" y="1251" width="5" height="5" fill="#5a7a6a"/>
<rect x="573" y="1251" width="5" height="5" fill="#8a5a50"/>
<rect x="578" y="1251" width="5" height="5" fill="#6a8a60"/>
<rect x="583" y="1251" width="5" height="5" fill="#5a7a6a"/>
<rect x="588" y="1251" width="5" height="5" fill="#4a6a7a"/>
<rect x="593" y="1251" width="5" height="5" fill="#5a7a6a"/>
<rect x="603" y="1251" width="5" height="5" fill="#2a3a3a"/>
<rect x="608" y="1251" width="3" height="5" fill="#8a5a50"/>
<rect x="488" y="1256" width="5" height="5" fill="#b0a898"/>
<rect x="493" y="1256" width="5" height="5" fill="#3f7a5a"/>
<rect x="498" y="1256" width="5" height="5" fill="#3f7a5a"/>
<rect x="503" y="1256" width="5" height="5" fill="#b0a898"/>
<rect x="508" y="1256" width="5" height="5" fill="#2f7a45"/>
<rect x="523" y="1256" width="5" height="5" fill="#3f7a5a"/>
<rect x="528" y="1256" width="5" height="5" fill="#a89a80"/>
<rect x="533" y="1256" width="5" height="5" fill="#5a4a38"/>
<rect x="568" y="1256" width="5" height="5" fill="#6a8a60"/>
<rect x="573" y="1256" width="5" height="5" fill="#6a8a60"/>
<rect x="578" y="1256" width="5" height="5" fill="#5a7a6a"/>
<rect x="583" y="1256" width="5" height="5" fill="#5a7a6a"/>
<rect x="588" y="1256" width="5" height="5" fill="#3a9a78"/>
<rect x="593" y="1256" width="5" height="5" fill="#2a3a3a"/>
<rect x="598" y="1256" width="5" height="5" fill="#8a9a40"/>
<rect x="608" y="1256" width="3" height="5" fill="#2a7a5e"/>
<rect x="488" y="1261" width="5" height="5" fill="#2f6f4f"/>
<rect x="493" y="1261" width="5" height="5" fill="#3a5a8a"/>
<rect x="498" y="1261" width="5" height="5" fill="#7a4a4a"/>
<rect x="508" y="1261" width="5" height="5" fill="#7a4a4a"/>
<rect x="513" y="1261" width="5" height="5" fill="#a09a88"/>
<rect x="518" y="1261" width="5" height="5" fill="#a09a88"/>
<rect x="523" y="1261" width="5" height="5" fill="#3f8a6a"/>
<rect x="528" y="1261" width="5" height="5" fill="#2f7a55"/>
<rect x="533" y="1261" width="5" height="5" fill="#3f8a6a"/>
<rect x="568" y="1261" width="5" height="5" fill="#8a5a50"/>
<rect x="578" y="1261" width="5" height="5" fill="#5a7a6a"/>
<rect x="583" y="1261" width="5" height="5" fill="#2a7a5e"/>
<rect x="588" y="1261" width="5" height="5" fill="#7a4a40"/>
<rect x="593" y="1261" width="5" height="5" fill="#5a7a6a"/>
<rect x="598" y="1261" width="5" height="5" fill="#5a7a6a"/>
<rect x="603" y="1261" width="5" height="5" fill="#a0a098"/>
<rect x="488" y="1266" width="5" height="5" fill="#6a5a48"/>
<rect x="493" y="1266" width="5" height="5" fill="#3f8a6a"/>
<rect x="503" y="1266" width="5" height="5" fill="#a09a88"/>
<rect x="508" y="1266" width="5" height="5" fill="#2f7a55"/>
<rect x="513" y="1266" width="5" height="5" fill="#8a9aa0"/>
<rect x="518" y="1266" width="5" height="5" fill="#3c8a66"/>
<rect x="523" y="1266" width="5" height="5" fill="#2f7a55"/>
<rect x="528" y="1266" width="5" height="5" fill="#6a5a48"/>
<rect x="533" y="1266" width="5" height="5" fill="#3a5a8a"/>
<rect x="568" y="1266" width="5" height="5" fill="#6a6a58"/>
<rect x="573" y="1266" width="5" height="5" fill="#2f8f70"/>
<rect x="578" y="1266" width="5" height="5" fill="#8a5a50"/>
<rect x="583" y="1266" width="5" height="5" fill="#7a4a40"/>
<rect x="588" y="1266" width="5" height="5" fill="#2f8f70"/>
<rect x="593" y="1266" width="5" height="5" fill="#6a8a60"/>
<rect x="608" y="1266" width="3" height="5" fill="#8a9a40"/>
<rect x="488" y="1271" width="5" height="5" fill="#6a5a48"/>
<rect x="493" y="1271" width="5" height="5" fill="#3f8a6a"/>
<rect x="498" y="1271" width="5" height="5" fill="#6a5a48"/>
<rect x="503" y="1271" width="5" height="5" fill="#8a9aa0"/>
<rect x="508" y="1271" width="5" height="5" fill="#2f7a55"/>
<rect x="518" y="1271" width="5" height="5" fill="#2f7a55"/>
<rect x="523" y="1271" width="5" height="5" fill="#3f8a6a"/>
<rect x="533" y="1271" width="5" height="5" fill="#3a5a8a"/>
<rect x="573" y="1271" width="5" height="5" fill="#6a6a58"/>
<rect x="578" y="1271" width="5" height="5" fill="#2f8f70"/>
<rect x="583" y="1271" width="5" height="5" fill="#6a6a58"/>
<rect x="598" y="1271" width="5" height="5" fill="#6a8a60"/>
<rect x="608" y="1271" width="3" height="5" fill="#6a6a58"/>
<rect x="493" y="1276" width="5" height="5" fill="#8a9aa0"/>
<rect x="498" y="1276" width="5" height="5" fill="#a09a88"/>
<rect x="513" y="1276" width="5" height="5" fill="#6a5a48"/>
<rect x="518" y="1276" width="5" height="5" fill="#2f7a55"/>
<rect x="523" y="1276" width="5" height="5" fill="#7a4a4a"/>
<rect x="533" y="1276" width="5" height="5" fill="#6a5a48"/>
<rect x="568" y="1276" width="5" height="5" fill="#3a9a78"/>
<rect x="573" y="1276" width="5" height="5" fill="#4a6a7a"/>
<rect x="578" y="1276" width="5" height="5" fill="#7a4a40"/>
<rect x="583" y="1276" width="5" height="5" fill="#7a4a40"/>
<rect x="588" y="1276" width="5" height="5" fill="#2a3a3a"/>
<rect x="598" y="1276" width="5" height="5" fill="#6a8a60"/>
<rect x="603" y="1276" width="5" height="5" fill="#7a4a40"/>
<rect x="608" y="1276" width="3" height="5" fill="#8a9a40"/>
<rect x="488" y="1281" width="5" height="5" fill="#7a4a4a"/>
<rect x="493" y="1281" width="5" height="5" fill="#6a5a48"/>
<rect x="498" y="1281" width="5" height="5" fill="#3a5a8a"/>
<rect x="503" y="1281" width="5" height="5" fill="#2f7a55"/>
<rect x="508" y="1281" width="5" height="5" fill="#3c8a66"/>
<rect x="513" y="1281" width="5" height="5" fill="#2f7a55"/>
<rect x="518" y="1281" width="5" height="5" fill="#6a5a48"/>
<rect x="523" y="1281" width="5" height="5" fill="#3a5a8a"/>
<rect x="528" y="1281" width="5" height="5" fill="#3f8a6a"/>
<rect x="568" y="1281" width="5" height="5" fill="#3a9a78"/>
<rect x="573" y="1281" width="5" height="5" fill="#4a8a6a"/>
<rect x="578" y="1281" width="5" height="5" fill="#2a3a3a"/>
<rect x="583" y="1281" width="5" height="5" fill="#4a6a7a"/>
<rect x="588" y="1281" width="5" height="5" fill="#3a9a78"/>
<rect x="593" y="1281" width="5" height="5" fill="#8a9a40"/>
<rect x="598" y="1281" width="5" height="5" fill="#6a6a58"/>
<rect x="603" y="1281" width="5" height="5" fill="#8a5a50"/>
<rect x="608" y="1281" width="3" height="5" fill="#3a9a78"/>
<rect x="488" y="1286" width="5" height="5" fill="#3f8a6a"/>
<rect x="493" y="1286" width="5" height="5" fill="#3f8a6a"/>
<rect x="498" y="1286" width="5" height="5" fill="#2f7a55"/>
<rect x="508" y="1286" width="5" height="5" fill="#3a5a8a"/>
<rect x="513" y="1286" width="5" height="5" fill="#2f7a55"/>
<rect x="518" y="1286" width="5" height="5" fill="#a09a88"/>
<rect x="528" y="1286" width="5" height="5" fill="#2f6f4f"/>
<rect x="533" y="1286" width="5" height="5" fill="#2f7a55"/>
<rect x="568" y="1286" width="5" height="5" fill="#2f8f70"/>
<rect x="573" y="1286" width="5" height="5" fill="#7a4a40"/>
<rect x="578" y="1286" width="5" height="5" fill="#5a7a6a"/>
<rect x="583" y="1286" width="5" height="5" fill="#8a5a50"/>
<rect x="593" y="1286" width="5" height="5" fill="#8a5a50"/>
<rect x="598" y="1286" width="5" height="5" fill="#3a9a78"/>
<rect x="603" y="1286" width="5" height="5" fill="#5a7a6a"/>
<rect x="608" y="1286" width="3" height="5" fill="#7a4a40"/>
<rect x="488" y="1291" width="5" height="5" fill="#9a9a9a"/>
<rect x="493" y="1291" width="5" height="5" fill="#8a4a4a"/>
<rect x="498" y="1291" width="5" height="5" fill="#5a3a30"/>
<rect x="503" y="1291" width="5" height="5" fill="#2f7a55"/>
<rect x="508" y="1291" width="5" height="5" fill="#5a7a6a"/>
<rect x="513" y="1291" width="5" height="5" fill="#9a9a9a"/>
<rect x="518" y="1291" width="5" height="5" fill="#6a4a40"/>
<rect x="523" y="1291" width="5" height="5" fill="#2f7a55"/>
<rect x="528" y="1291" width="5" height="5" fill="#6a4a40"/>
<rect x="533" y="1291" width="5" height="5" fill="#8a5a50"/>
<rect x="568" y="1291" width="5" height="5" fill="#2f8f70"/>
<rect x="573" y="1291" width="5" height="5" fill="#6a8a60"/>
<rect x="578" y="1291" width="5" height="5" fill="#7a4a40"/>
<rect x="583" y="1291" width="5" height="5" fill="#7a4a40"/>
<rect x="588" y="1291" width="5" height="5" fill="#4a6a7a"/>
<rect x="593" y="1291" width="5" height="5" fill="#8a5a50"/>
<rect x="598" y="1291" width="5" height="5" fill="#2a7a5e"/>
<rect x="608" y="1291" width="3" height="5" fill="#4a6a7a"/>
<rect x="488" y="1296" width="5" height="5" fill="#3a8a6a"/>
<rect x="498" y="1296" width="5" height="5" fill="#2f7a55"/>
<rect x="503" y="1296" width="5" height="5" fill="#9a9a9a"/>
<rect x="508" y="1296" width="5" height="5" fill="#906a60"/>
<rect x="513" y="1296" width="5" height="5" fill="#3a8a6a"/>
<rect x="518" y="1296" width="5" height="5" fill="#a09080"/>
<rect x="523" y="1296" width="5" height="5" fill="#3a8a6a"/>
<rect x="528" y="1296" width="5" height="5" fill="#906a60"/>
<rect x="533" y="1296" width="5" height="5" fill="#9a9a9a"/>
<rect x="538" y="1296" width="5" height="5" fill="#2a6a55"/>
<rect x="543" y="1296" width="5" height="5" fill="#3a9a78"/>
<rect x="548" y="1296" width="5" height="5" fill="#2a6a55"/>
<rect x="553" y="1296" width="5" height="5" fill="#2a6a55"/>
<rect x="558" y="1296" width="5" height="5" fill="#3a9a78"/>
<rect x="563" y="1296" width="5" height="5" fill="#2a6a55"/>
<rect x="568" y="1296" width="5" height="5" fill="#6a6a58"/>
<rect x="573" y="1296" width="5" height="5" fill="#2a3a3a"/>
<rect x="578" y="1296" width="5" height="5" fill="#6a6a58"/>
<rect x="583" y="1296" width="5" height="5" fill="#6a8a60"/>
<rect x="588" y="1296" width="5" height="5" fill="#3a9a78"/>
<rect x="593" y="1296" width="5" height="5" fill="#2a3a3a"/>
<rect x="598" y="1296" width="5" height="5" fill="#a0a098"/>
<rect x="608" y="1296" width="3" height="5" fill="#2a3a3a"/>
<rect x="493" y="1301" width="5" height="5" fill="#8a5a50"/>
<rect x="498" y="1301" width="5" height="5" fill="#8a5a50"/>
<rect x="508" y="1301" width="5" height="5" fill="#6a4a40"/>
<rect x="513" y="1301" width="5" height="5" fill="#2f7a55"/>
<rect x="518" y="1301" width="5" height="5" fill="#a09080"/>
<rect x="523" y="1301" width="5" height="5" fill="#a09080"/>
<rect x="528" y="1301" width="5" height="5" fill="#5a3a30"/>
<rect x="543" y="1301" width="5" height="5" fill="#6a8a7a"/>
<rect x="548" y="1301" width="5" height="5" fill="#2f8a6a"/>
<rect x="553" y="1301" width="5" height="5" fill="#2f8a6a"/>
<rect x="558" y="1301" width="5" height="5" fill="#6a8a7a"/>
<rect x="568" y="1301" width="5" height="5" fill="#7a4a40"/>
<rect x="573" y="1301" width="5" height="5" fill="#8a5a50"/>
<rect x="578" y="1301" width="5" height="5" fill="#4a6a7a"/>
<rect x="583" y="1301" width="5" height="5" fill="#7a4a40"/>
<rect x="588" y="1301" width="5" height="5" fill="#3a9a78"/>
<rect x="593" y="1301" width="5" height="5" fill="#2f8f70"/>
<rect x="598" y="1301" width="5" height="5" fill="#2f8f70"/>
<rect x="603" y="1301" width="5" height="5" fill="#4a6a7a"/>
<rect x="608" y="1301" width="3" height="5" fill="#a0a098"/>
<rect x="488" y="1306" width="5" height="5" fill="#6a4a40"/>
<rect x="493" y="1306" width="5" height="5" fill="#3a8a6a"/>
<rect x="503" y="1306" width="5" height="5" fill="#9a9a9a"/>
<rect x="508" y="1306" width="5" height="5" fill="#a09080"/>
<rect x="518" y="1306" width="5" height="5" fill="#6a4a40"/>
<rect x="523" y="1306" width="5" height="5" fill="#9a9a9a"/>
<rect x="528" y="1306" width="5" height="5" fill="#a09080"/>
<rect x="533" y="1306" width="5" height="5" fill="#a09080"/>
<rect x="538" y="1306" width="5" height="5" fill="#a03a3a"/>
<rect x="548" y="1306" width="5" height="5" fill="#2f8a6a"/>
<rect x="558" y="1306" width="5" height="5" fill="#2a6a55"/>
<rect x="568" y="1306" width="5" height="5" fill="#7a4a40"/>
<rect x="573" y="1306" width="5" height="5" fill="#2f8f70"/>
<rect x="578" y="1306" width="5" height="5" fill="#4a8a6a"/>
<rect x="588" y="1306" width="5" height="5" fill="#8a5a50"/>
<rect x="593" y="1306" width="5" height="5" fill="#5a7a6a"/>
<rect x="603" y="1306" width="5" height="5" fill="#7a4a40"/>
<rect x="488" y="1311" width="5" height="5" fill="#8a4a4a"/>
<rect x="493" y="1311" width="5" height="5" fill="#2f7a55"/>
<rect x="508" y="1311" width="5" height="5" fill="#8a5a50"/>
<rect x="513" y="1311" width="5" height="5" fill="#8a4a4a"/>
<rect x="523" y="1311" width="5" height="5" fill="#906a60"/>
<rect x="528" y="1311" width="5" height="5" fill="#3a8a6a"/>
<rect x="543" y="1311" width="5" height="5" fill="#2f8a6a"/>
<rect x="548" y="1311" width="5" height="5" fill="#3a9a78"/>
<rect x="553" y="1311" width="5" height="5" fill="#2f8a6a"/>
<rect x="558" y="1311" width="5" height="5" fill="#4a7a6a"/>
<rect x="568" y="1311" width="5" height="5" fill="#5a7a6a"/>
<rect x="578" y="1311" width="5" height="5" fill="#5a7a6a"/>
<rect x="583" y="1311" width="5" height="5" fill="#5a7a6a"/>
<rect x="588" y="1311" width="5" height="5" fill="#4a8a6a"/>
<rect x="598" y="1311" width="5" height="5" fill="#7a4a40"/>
<rect x="608" y="1311" width="3" height="5" fill="#8a5a50"/>
<rect x="488" y="1316" width="5" height="5" fill="#906a60"/>
<rect x="493" y="1316" width="5" height="5" fill="#2f7a55"/>
<rect x="498" y="1316" width="5" height="5" fill="#5a7a6a"/>
<rect x="503" y="1316" width="5" height="5" fill="#2f7a55"/>
<rect x="508" y="1316" width="5" height="5" fill="#5a7a6a"/>
<rect x="513" y="1316" width="5" height="5" fill="#3a8a6a"/>
<rect x="518" y="1316" width="5" height="5" fill="#8a4a4a"/>
<rect x="523" y="1316" width="5" height="5" fill="#a09080"/>
<rect x="528" y="1316" width="5" height="5" fill="#9a9a9a"/>
<rect x="533" y="1316" width="5" height="5" fill="#9a9a9a"/>
<rect x="538" y="1316" width="5" height="5" fill="#2f8a6a"/>
<rect x="553" y="1316" width="5" height="5" fill="#2f8a6a"/>
<rect x="558" y="1316" width="5" height="5" fill="#2f8a6a"/>
<rect x="563" y="1316" width="5" height="5" fill="#2f8a6a"/>
<rect x="568" y="1316" width="5" height="5" fill="#2f8f70"/>
<rect x="573" y="1316" width="5" height="5" fill="#2a3a3a"/>
<rect x="578" y="1316" width="5" height="5" fill="#2f8f70"/>
<rect x="583" y="1316" width="5" height="5" fill="#3a9a78"/>
<rect x="588" y="1316" width="5" height="5" fill="#2f8f70"/>
<rect x="593" y="1316" width="5" height="5" fill="#2f8f70"/>
<rect x="598" y="1316" width="5" height="5" fill="#3a9a78"/>
<rect x="608" y="1316" width="3" height="5" fill="#4a6a7a"/>
<rect x="493" y="1321" width="5" height="1" fill="#9a9a9a"/>
<rect x="498" y="1321" width="5" height="1" fill="#9a9a9a"/>
<rect x="503" y="1321" width="5" height="1" fill="#2f7a55"/>
<rect x="508" y="1321" width="5" height="1" fill="#5a7a6a"/>
<rect x="513" y="1321" width="5" height="1" fill="#6a4a40"/>
<rect x="523" y="1321" width="5" height="1" fill="#8a5a50"/>
<rect x="533" y="1321" width="5" height="1" fill="#5a3a30"/>
<rect x="538" y="1321" width="5" height="1" fill="#2f8a6a"/>
<rect x="548" y="1321" width="5" height="1" fill="#2f8a6a"/>
<rect x="558" y="1321" width="5" height="1" fill="#2a6a55"/>
<rect x="573" y="1321" width="5" height="1" fill="#2a7a5e"/>
<rect x="583" y="1321" width="5" height="1" fill="#8a9a40"/>
<rect x="588" y="1321" width="5" height="1" fill="#8a5a50"/>
<rect x="593" y="1321" width="5" height="1" fill="#2f8f70"/>
<rect x="598" y="1321" width="5" height="1" fill="#3a9a78"/>
<rect x="603" y="1321" width="5" height="1" fill="#2a3a3a"/>
<rect x="535" y="1229" width="29" height="63" fill="#cfe6f3"/>
<rect x="535" y="1229" width="10" height="63" fill="#c39a6c"/>
<rect x="545" y="1250" width="10" height="14" fill="#8ac23a"/>
<rect x="545" y="1262" width="10" height="14" fill="#1a9ab3"/>
<rect x="555" y="1250" width="9" height="42" fill="#2fab85"/>
<rect x="535" y="1275" width="20" height="17" fill="#2fab85"/>
<rect x="537" y="1268" width="8" height="12" fill="#eee6d8"/>
<rect x="556" y="1240" width="8" height="6" fill="#b5402f"/>
<rect x="535.5" y="1229" width="29" height="63" fill="none" stroke="#e8231e" stroke-width="3"/>
<!-- slider overlay -->
<rect x="22" y="13" width="9" height="40" rx="4.5" fill="#f2f2f2"/>
<rect x="22" y="60" width="9" height="78" rx="4.5" fill="#1e88e5"/>
<circle cx="26.5" cy="55" r="13.5" fill="#ffffff" stroke="#cfcfcf" stroke-width="1.5"/>
</svg>
<div class="r" style="left:2211px;top:294px;width:561px;height:1480px;background:#ffffff;"></div>
<div class="r" style="left:2210px;top:294px;width:2px;height:1480px;background:#e6e6e6;"></div>
<div class="r" style="left:2212px;top:292px;width:280px;height:4px;background:#7b80f2;"></div>
<div class="r" style="left:2492px;top:296px;width:2px;height:77px;background:#e3e3e3;"></div>
<div class="r" style="left:2492px;top:371px;width:280px;height:2px;background:#e3e3e3;"></div>
<div class="t" style="left:2284px;top:323.6px;font-size:24px;line-height:24px;color:#3d3d3d;font-weight:700;transform:scaleX(0.88);transform-origin:0 0;">PROPERTIES</div>
<div class="t" style="left:2553px;top:323.6px;font-size:24px;line-height:24px;color:#9a9a9a;font-weight:700;transform:scaleX(0.93);transform-origin:0 0;">ACTIONS</div>
<div class="r" style="left:2668px;top:320px;width:56px;height:28px;border-radius:7px;background:#3a3a3a"></div>
<div class="t" style="left:2668.0px;width:56px;text-align:center;top:326.0px;font-size:20px;line-height:20px;color:#fff;font-weight:700;">10+</div>
<div class="r" style="left:2747px;top:381px;width:16px;height:1384px;border-radius:8px;background:#fbfbfb"></div>
<div class="t" style="left:2229px;top:409.4px;font-size:29px;line-height:29px;color:#3a3a3a;font-weight:700;transform:scaleX(0.93);transform-origin:0 0;">Marker</div>
<div class="t" style="left:2253px;top:482.0px;font-size:23.5px;line-height:23.5px;color:#3c3c3c;font-weight:400;">Zoom</div>
<div class="r" style="left:2420px;top:470px;width:128px;height:47px;border-radius:8px 0 0 8px;background:#f1f1f1"></div>
<div class="r" style="left:2551px;top:470px;width:29px;height:22.5px;border-radius:0 8px 0 0;background:#f1f1f1"></div>
<div class="r" style="left:2551px;top:494.5px;width:29px;height:22.5px;border-radius:0 0 8px 0;background:#f1f1f1"></div>
<div class="t" style="left:2412px;width:128px;text-align:right;top:482.5px;font-size:23.5px;line-height:23.5px;color:#333;font-weight:400;">4.6</div>
<svg class="r" style="left:2559px;top:479px;" width="13" height="8" viewBox="0 0 13 8"><path d="M0 8 L6.5 0 L13 8 Z" fill="#333"/></svg>
<svg class="r" style="left:2559px;top:501px;" width="13" height="8" viewBox="0 0 13 8"><path d="M0 0 L6.5 8 L13 0 Z" fill="#333"/></svg>
<div class="t" style="left:2253px;top:550.0px;font-size:23.5px;line-height:23.5px;color:#3c3c3c;font-weight:400;">Auto center</div>
<div class="r" style="left:2420px;top:538px;width:312px;height:48px;border-radius:12px;background:#f0f0f0"></div>
<div class="r" style="left:2425px;top:543px;width:145px;height:37px;border-radius:3px;background:#ffffff"></div>
<div class="t" style="left:2428.0px;width:140px;text-align:center;top:551.0px;font-size:23.5px;line-height:23.5px;color:#7b80e6;font-weight:400;">Yes</div>
<div class="t" style="left:2584.0px;width:140px;text-align:center;top:551.0px;font-size:23.5px;line-height:23.5px;color:#3c3c3c;font-weight:400;">No</div>
<div class="t" style="left:2253px;top:617.6px;font-size:23.5px;line-height:23.5px;color:#3c3c3c;font-weight:400;">Center</div>
<div class="r" style="left:2420px;top:606px;width:114px;height:47px;border-radius:8px 0 0 8px;background:#f1f1f1"></div>
<div class="r" style="left:2537px;top:606px;width:29px;height:22.5px;border-radius:0 8px 0 0;background:#f1f1f1"></div>
<div class="r" style="left:2537px;top:630.5px;width:29px;height:22.5px;border-radius:0 0 8px 0;background:#f1f1f1"></div>
<div class="t" style="left:2412px;width:114px;text-align:right;top:618.5px;font-size:23.5px;line-height:23.5px;color:#333;font-weight:400;">4774</div>
<svg class="r" style="left:2545px;top:615px;" width="13" height="8" viewBox="0 0 13 8"><path d="M0 8 L6.5 0 L13 8 Z" fill="#333"/></svg>
<svg class="r" style="left:2545px;top:637px;" width="13" height="8" viewBox="0 0 13 8"><path d="M0 0 L6.5 8 L13 0 Z" fill="#333"/></svg>
<div class="r" style="left:2586px;top:606px;width:114px;height:47px;border-radius:8px 0 0 8px;background:#f1f1f1"></div>
<div class="r" style="left:2703px;top:606px;width:29px;height:22.5px;border-radius:0 8px 0 0;background:#f1f1f1"></div>
<div class="r" style="left:2703px;top:630.5px;width:29px;height:22.5px;border-radius:0 0 8px 0;background:#f1f1f1"></div>
<div class="t" style="left:2578px;width:114px;text-align:right;top:618.5px;font-size:23.5px;line-height:23.5px;color:#333;font-weight:400;">884</div>
<svg class="r" style="left:2711px;top:615px;" width="13" height="8" viewBox="0 0 13 8"><path d="M0 8 L6.5 0 L13 8 Z" fill="#333"/></svg>
<svg class="r" style="left:2711px;top:637px;" width="13" height="8" viewBox="0 0 13 8"><path d="M0 0 L6.5 8 L13 0 Z" fill="#333"/></svg>
<div class="r" style="left:2246px;top:682px;width:486px;height:2px;background:#e8e8e8;"></div>
<div class="t" style="left:2253px;top:723.0px;font-size:23.5px;line-height:23.5px;color:#3c3c3c;font-weight:400;">Marker data</div>
<div class="r" style="left:2420px;top:713px;width:312px;height:47px;border-radius:10px;background:#f1f1f1"></div>
<div class="t" style="left:2426.0px;width:300px;text-align:center;top:725.0px;font-size:23.5px;line-height:23.5px;color:#333;font-weight:700;">Update</div>
</div></div><script>(function(){var w=window.innerWidth;if(w&&Math.abs(w-2884)>40){document.documentElement.style.zoom=w/2884;}})();</script></body></html>
